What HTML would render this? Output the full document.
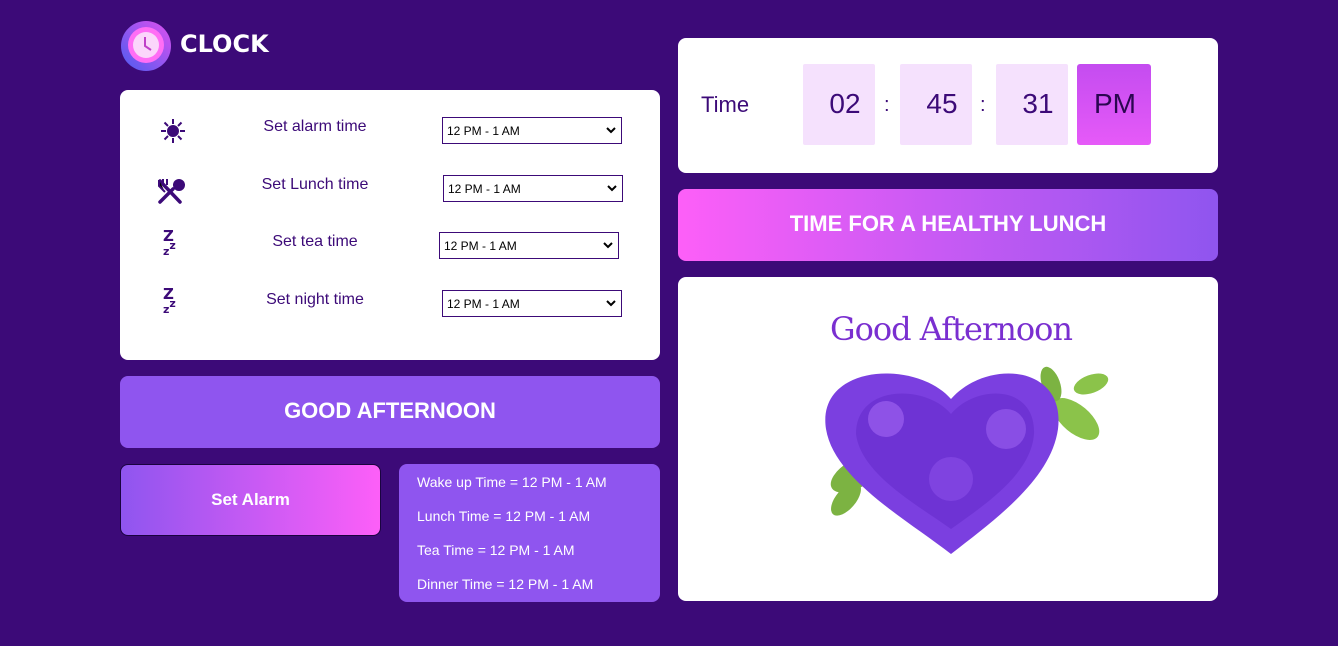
<!DOCTYPE html>
<html><head><meta charset="utf-8"><style>
*{box-sizing:border-box;margin:0;padding:0}
body{width:1338px;height:646px;background:#3c0a78;font-family:"Liberation Sans",Arial,sans-serif;position:relative;overflow:hidden}
.abs{position:absolute}
.card{background:#fff;border-radius:8px}
.lbl{color:#3c0a78;font-size:16px;position:absolute;width:160px;text-align:center}
.sel{position:absolute;width:180px;height:27px;border:1px solid #3c0a78;font-size:12px;color:#000;padding:6px 4px;background:#fff}
.sel svg{position:absolute;right:5px;top:9px}
.box{position:absolute;top:26px;width:72px;height:81px;background:#f5e1fd;color:#3c0a78;font-size:28px;text-align:center;line-height:79px;border-radius:2px;padding-left:12px}
.sum{color:#fff;font-size:14px;position:absolute;left:18px}
</style></head><body>
<svg class="abs" style="left:120px;top:20px" width="52" height="52" viewBox="0 0 52 52">
<defs><linearGradient id="g1" x1="0" y1="1" x2="1" y2="0"><stop offset="0" stop-color="#4b5cf0"/><stop offset="1" stop-color="#e04ff0"/></linearGradient></defs>
<circle cx="26" cy="26" r="25" fill="url(#g1)"/><circle cx="26" cy="25" r="18" fill="#ff6ef5"/><circle cx="26" cy="25" r="13" fill="#fbd6fb"/>
<path d="M25 17v9l6 4" stroke="#c03fc8" stroke-width="2" fill="none"/></svg>
<div class="abs" style="left:180px;top:30px;color:#fff;font-size:24px;font-weight:900;font-family:'DejaVu Sans',sans-serif">CLOCK</div>

<div class="card abs" style="left:120px;top:90px;width:540px;height:270px">
<svg class="abs" style="left:40px;top:28px" width="26" height="26" viewBox="0 0 26 26" stroke="#3c0a78" stroke-width="2"><circle cx="13" cy="13" r="5" fill="#3c0a78"/><path d="M13 1v5M13 20v5M1 13h5M20 13h5M4.5 4.5l3.5 3.5M18 18l3.5 3.5M4.5 21.5L8 18M18 8l3.5-3.5"/></svg>
<div class="lbl" style="left:115px;top:28px">Set alarm time</div>
<div class="sel" style="left:322px;top:27px">12 PM - 1 AM<svg width="10" height="7" viewBox="0 0 10 7"><path d="M1 1l4 4 4-4" stroke="#000" stroke-width="2" fill="none"/></svg></div>
<svg class="abs" style="left:37px;top:88px" width="32" height="26" viewBox="0 0 32 26"><path d="M3 3l20 21M3 24L16 11" stroke="#3c0a78" stroke-width="3.5" stroke-linecap="round"/><ellipse cx="22" cy="7" rx="6" ry="6" fill="#3c0a78"/><path d="M2 2v6l6 6M6 1v6M10 1v6" stroke="#3c0a78" stroke-width="2"/></svg>
<div class="lbl" style="left:115px;top:86px">Set Lunch time</div>
<div class="sel" style="left:323px;top:85px">12 PM - 1 AM<svg width="10" height="7" viewBox="0 0 10 7"><path d="M1 1l4 4 4-4" stroke="#000" stroke-width="2" fill="none"/></svg></div>
<div class="abs" style="left:43px;top:141px;color:#3c0a78;font-weight:900;font-size:15px;line-height:10px;font-family:'DejaVu Sans',sans-serif">Z<br><span style="font-size:11px">z</span><sup style="font-size:11px">z</sup></div>
<div class="lbl" style="left:115px;top:143px">Set tea time</div>
<div class="sel" style="left:319px;top:142px">12 PM - 1 AM<svg width="10" height="7" viewBox="0 0 10 7"><path d="M1 1l4 4 4-4" stroke="#000" stroke-width="2" fill="none"/></svg></div>
<div class="abs" style="left:43px;top:199px;color:#3c0a78;font-weight:900;font-size:15px;line-height:10px;font-family:'DejaVu Sans',sans-serif">Z<br><span style="font-size:11px">z</span><sup style="font-size:11px">z</sup></div>
<div class="lbl" style="left:115px;top:201px">Set night time</div>
<div class="sel" style="left:322px;top:200px">12 PM - 1 AM<svg width="10" height="7" viewBox="0 0 10 7"><path d="M1 1l4 4 4-4" stroke="#000" stroke-width="2" fill="none"/></svg></div>
</div>

<div class="abs" style="left:120px;top:376px;width:540px;height:72px;background:#8f55ef;border-radius:8px;color:#fff;font-weight:bold;font-size:22px;text-align:center;line-height:70px">GOOD AFTERNOON</div>
<div class="abs" style="left:120px;top:464px;width:261px;height:72px;background:linear-gradient(90deg,#8f55ef,#fd5ff8);border:1px solid #1a0340;border-radius:8px;color:#fff;font-weight:bold;font-size:17px;text-align:center;line-height:70px">Set Alarm</div>
<div class="abs" style="left:399px;top:464px;width:261px;height:138px;background:#8f55ef;border-radius:8px">
<div class="sum" style="top:10px">Wake up Time = 12 PM - 1 AM</div>
<div class="sum" style="top:44px">Lunch Time = 12 PM - 1 AM</div>
<div class="sum" style="top:78px">Tea Time = 12 PM - 1 AM</div>
<div class="sum" style="top:112px">Dinner Time = 12 PM - 1 AM</div>
</div>

<div class="card abs" style="left:678px;top:38px;width:540px;height:135px">
<div class="abs" style="left:23px;top:54px;color:#3c0a78;font-size:22px">Time</div>
<div class="box" style="left:125px">02</div>
<div class="abs" style="left:206px;top:56px;font-size:20px;color:#3c0a78">:</div>
<div class="box" style="left:222px">45</div>
<div class="abs" style="left:302px;top:56px;font-size:20px;color:#3c0a78">:</div>
<div class="box" style="left:318px">31</div>
<div class="box" style="left:399px;width:74px;padding-left:2px;background:linear-gradient(180deg,#c44cf0,#e65af8);color:#2a0650;border-radius:3px">PM</div>
</div>
<div class="abs" style="left:678px;top:189px;width:540px;height:72px;background:linear-gradient(90deg,#fd5ff8,#8f55ef);border-radius:8px;color:#fff;font-weight:bold;font-size:22px;text-align:center;line-height:70px">TIME FOR A HEALTHY LUNCH</div>

<div class="card abs" style="left:678px;top:277px;width:540px;height:324px;overflow:hidden">
<div class="abs" style="left:152px;top:33px;color:#7a2fd0;font-size:32px;font-family:'DejaVu Serif',serif;letter-spacing:-1px">Good Afternoon</div>
<svg class="abs" style="left:128px;top:82px" width="310" height="205" viewBox="0 0 310 205">
<ellipse cx="50" cy="115" rx="28" ry="14" fill="#7cb342" transform="rotate(-30 50 115)"/>
<ellipse cx="270" cy="60" rx="28" ry="14" fill="#8bc34a" transform="rotate(40 270 60)"/>
<ellipse cx="285" cy="25" rx="18" ry="9" fill="#8bc34a" transform="rotate(-20 285 25)"/>
<ellipse cx="245" cy="25" rx="18" ry="9" fill="#7cb342" transform="rotate(70 245 25)"/>
<path d="M145 40 C110 0 10 5 20 70 C28 120 100 160 145 195 C190 160 245 120 252 70 C260 5 180 0 145 40Z" fill="#7b3fe0"/>
<path d="M145 55 C120 25 50 25 50 75 C55 115 110 145 145 170 C180 145 225 115 228 75 C230 25 170 25 145 55Z" fill="#6a2fcf" opacity=".7"/>
<circle cx="80" cy="60" r="18" fill="#9b60f0" opacity=".7"/><circle cx="200" cy="70" r="20" fill="#9b60f0" opacity=".6"/><circle cx="145" cy="120" r="22" fill="#8a4fe8" opacity=".6"/>
<ellipse cx="40" cy="140" rx="20" ry="10" fill="#7cb342" transform="rotate(-50 40 140)"/>
</svg>
</div>
</body></html>
